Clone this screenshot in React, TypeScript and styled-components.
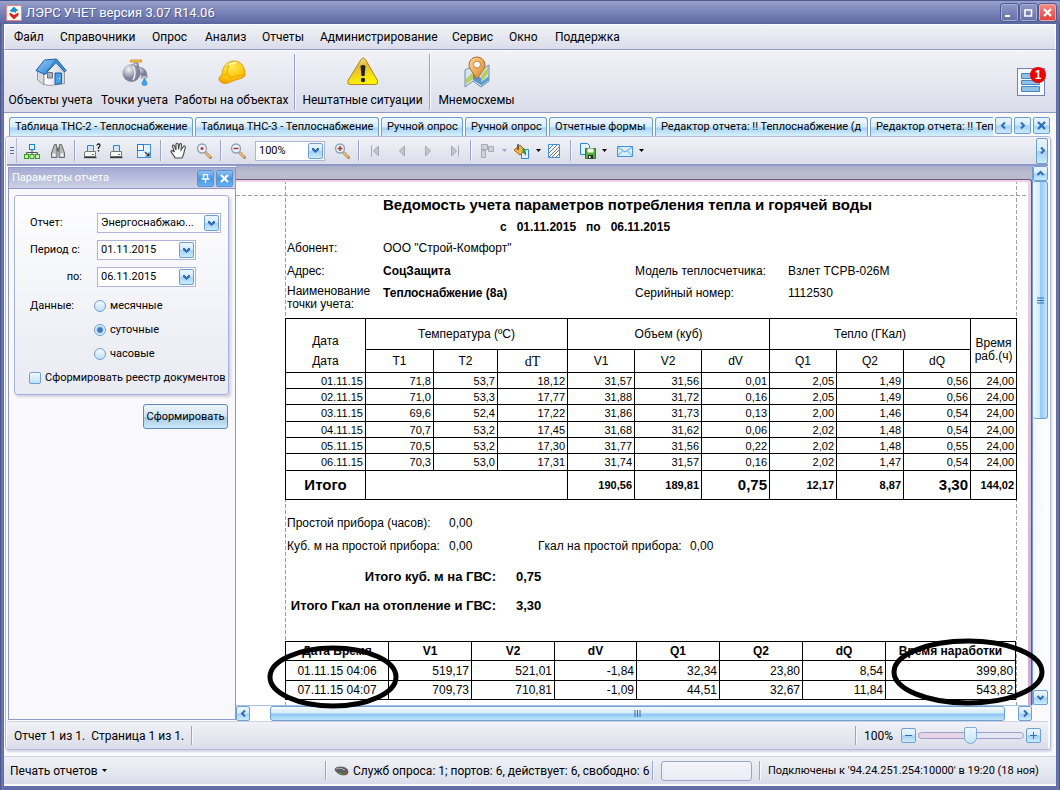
import React from "react";
import styled, { createGlobalStyle, css } from "styled-components";

const uiFont = 'Roboto, "Noto Sans", sans-serif';
const printFont = '"Liberation Sans", Arial, sans-serif';
const edge = "#8f99c6";

const GlobalStyle = createGlobalStyle`
  * { box-sizing: border-box; }
  body { margin: 0; font: 12px/16px ${uiFont}; color: #000; }
  button, input, select { font: inherit; color: inherit; margin: 0; padding: 0; }
  button { border: 0; background: none; cursor: pointer; }
  svg { display: block; }
`;

const barFill = css`background: linear-gradient(#f1f2f7, #e6e8f0 50%, #dadcea);`;
const glass = css`
  border: 1px solid #6f9fd0;
  border-radius: 2px;
  background: linear-gradient(#eaf6fe, #d3eafb 48%, #a4d0f3 52%, #c9ecff);
`;

/* ---------- window frame ---------- */

const Frame = styled.div`
  min-height: 100vh;
  display: flex;
  flex-direction: column;
  padding: 0 4px 4px;
  background: linear-gradient(90deg, #4e598f 1px, #7984b8 2px, #626ca5 3px, #626ca5 calc(100% - 3px), #7984b8 calc(100% - 2px), #4e598f calc(100% - 1px));
`;

const TitleBar = styled.header`
  display: flex;
  align-items: center;
  gap: 4px;
  height: 24px;
  margin: 0 -4px;
  padding: 0 4px 0 6px;
  color: #fff;
  border-top: 1px solid #4e598f;
  background: linear-gradient(#9aa3ce, #8790bf 25%, #6670aa 85%, #5a649c);
`;

const WindowTitle = styled.h1`
  flex: 1;
  margin: 0;
  font: 13px/20px ${uiFont};
  text-shadow: 1px 1px 0 #4e598f;
`;

const CaptionButtons = styled.div`
  display: flex;
  gap: 2px;
`;

const CaptionButton = styled.button<{ $close?: boolean }>`
  display: grid;
  place-items: center;
  width: 17px;
  height: 17px;
  border: 1px solid ${(p) => (p.$close ? "#f3a9a4" : "#a5aed4")};
  border-radius: 2px;
  outline: 1px solid #515c94;
  background: ${(p) => (p.$close ? "linear-gradient(#f28b85, #e3423a)" : "linear-gradient(#8d96c4, #6771aa)")};
`;

const Client = styled.div`
  flex: 1;
  display: flex;
  flex-direction: column;
  background: #fbfbfe;
  padding-bottom: 2px;
`;

const MenuBar = styled.nav`
  display: flex;
  align-items: center;
  gap: 17px;
  height: 26px;
  padding: 0 9px;
  border: 1px solid #fff;
  border-bottom-color: ${edge};
  ${barFill}
`;

const MenuItem = styled.button<{ $width: number }>`
  width: ${(p) => p.$width}px;
  white-space: nowrap;
  text-align: left;
`;

const Ribbon = styled.div`
  display: flex;
  height: 63px;
  padding: 3px 11px 2px 0;
  border-top: 1px solid #fff;
  border-bottom: 1px solid ${edge};
  ${barFill}
`;

const RibbonButton = styled.button<{ $width: number }>`
  display: flex;
  flex-direction: column;
  align-items: center;
  width: ${(p) => p.$width}px;
  gap: 4px;
  padding-top: 2px;
  white-space: nowrap;
`;

const Divider = styled.i<{ $space?: number }>`
  flex: none;
  width: 2px;
  align-self: stretch;
  margin: 0 ${(p) => p.$space ?? 3}px;
  border-left: 1px solid #9ba4cc;
  border-right: 1px solid #f8f8fc;
`;

const Notices = styled.button`
  position: relative;
  align-self: center;
  width: 28px;
  height: 28px;
  margin-left: auto;
  border: 1px solid #7380b4;
  background: #f8fafd;
  padding: 3px;
`;

const Badge = styled.span`
  position: absolute;
  top: -2px;
  right: -2px;
  width: 16px;
  height: 16px;
  border-radius: 8px;
  background: #f20000;
  color: #fff;
  font: bold 12px/16px ${printFont};
`;

/* ---------- document tabs ---------- */

const Workspace = styled.main`
  flex: 1;
  display: flex;
  flex-direction: column;
  padding: 4px 5px 6px 1px;
`;

const TabStrip = styled.div`
  display: flex;
  align-items: flex-start;
  gap: 2px;
  height: 19px;
  padding: 0 1px 0 4px;
`;

const Tabs = styled.div`
  display: flex;
  flex: 1;
  min-width: 0;
  gap: 2px;
  overflow: hidden;
`;

const Tab = styled.button<{ $width: number }>`
  flex: none;
  width: ${(p) => p.$width}px;
  height: 19px;
  padding: 0 5px;
  overflow: hidden;
  white-space: nowrap;
  text-align: left;
  font: 11px/18px ${uiFont};
  border: 1px solid #6f9fd0;
  border-bottom: 0;
  border-radius: 3px 3px 0 0;
  background: linear-gradient(#f2f9fe, #d5ebfb 50%, #a9d3f4 55%, #d6f1ff);
`;

const GlassButton = styled.button<{ $w?: number; $h?: number }>`
  ${glass}
  flex: none;
  display: grid;
  place-items: center;
  width: ${(p) => p.$w ?? 17}px;
  height: ${(p) => p.$h ?? 17}px;
`;

const Document = styled.section`
  flex: 1;
  display: flex;
  flex-direction: column;
  border: 1px solid #b4b9da;
  border-radius: 3px;
  padding: 0 2px 0 1px;
  background: #fbfbfe;
  box-shadow: 1px 2px 2px #d5d6e0;
`;

const Toolbar = styled.div`
  display: flex;
  align-items: center;
  height: 29px;
  border-bottom: 2px solid ${edge};
  ${barFill}
`;

const Grip = styled.i`
  display: grid;
  place-items: center;
  align-self: stretch;
  width: 9px;
  margin: 1px 2px 1px 1px;
  border-right: 1px solid #b4b9da;
`;

const Tool = styled.button<{ $width?: number }>`
  flex: none;
  display: flex;
  align-items: center;
  gap: 6px;
  width: ${(p) => p.$width ?? 26}px;
  height: 22px;
  padding-left: 5px;
`;

const ToolDivider = styled(Divider)`
  margin: 3px 3px;
`;

const Field = styled.span<{ $width: number }>`
  display: flex;
  align-items: center;
  width: ${(p) => p.$width}px;
  height: 20px;
  padding-right: 1px;
  border: 1px solid #b0b5d8;
  background: #fff;
`;

const controlText = css`
  flex: 1;
  min-width: 0;
  height: 18px;
  padding: 0 0 0 3px;
  border: 0;
  outline: 0;
  background: none;
  font: 11px/18px ${uiFont};
`;

const Select = styled.select`
  ${controlText}
  appearance: none;
  text-overflow: ellipsis;
`;

const TextInput = styled.input`${controlText}`;

const Content = styled.div`
  flex: 1;
  display: flex;
`;

/* ---------- report parameters ---------- */

const Panel = styled.aside`
  flex: none;
  width: 228px;
  margin: 1px 0 1px 1px;
  border: 1px solid ${edge};
  background: #f9f9fc;
  font: 11px/16px ${uiFont};
`;

const PanelHeader = styled.div`
  display: flex;
  align-items: center;
  gap: 2px;
  height: 21px;
  padding: 0 2px 0 3px;
  color: #fff;
  border-bottom: 1px solid ${edge};
  background: linear-gradient(#a5acd2, #bcc1de 60%, #cfd2e7);
`;

const PanelTitle = styled.h2`
  flex: 1;
  margin: 0;
  font: 11px/18px ${uiFont};
`;

const PanelButton = styled(GlassButton)`
  border-color: #d6e9fa;
  outline: 1px solid #5b92cc;
  outline-offset: -1px;
  background: linear-gradient(#8cc0f2, #4b97e0 50%, #61b1f2);
`;

const Form = styled.form`
  padding: 6px 6px 0 5px;
`;

const Card = styled.fieldset`
  min-width: 0;
  margin: 0;
  padding: 17px 0 4px 14px;
  border: 1px solid #a9b0d5;
  border-radius: 3px;
  background: linear-gradient(#fefeff, #e9eaf3);
  box-shadow: 2px 2px 3px #cfd0da;
`;

const FormRow = styled.div`
  display: grid;
  grid-template-columns: 67px 1fr;
  align-items: center;
  height: 20px;
  margin-bottom: 7px;
  padding-left: 1px;
`;

const RowLabel = styled.label<{ $end?: boolean }>`
  text-align: ${(p) => (p.$end ? "right" : "left")};
  padding-right: 15px;
  white-space: nowrap;
`;

const ChoiceRow = styled.div`
  display: grid;
  grid-template-columns: 64px 1fr;
  align-items: start;
  padding-left: 1px;
`;

const Choices = styled.div`
  display: flex;
  flex-direction: column;
`;

const Choice = styled.label`
  display: flex;
  align-items: center;
  gap: 4px;
  height: 24px;
  white-space: nowrap;
`;

const Radio = styled.input`
  appearance: none;
  width: 12px;
  height: 12px;
  border: 1px solid #6f9fd0;
  border-radius: 6px;
  background: linear-gradient(#f4faff, #bfe0f8);
  &:checked { background: radial-gradient(#3c78bd 0 2px, #7fb2e2 3px, #dff0fd 4px); }
`;

const CheckBox = styled.input`
  appearance: none;
  width: 12px;
  height: 12px;
  ${glass}
  background: linear-gradient(#f4faff, #bfe0f8);
`;

const Submit = styled.button`
  ${glass}
  display: block;
  width: 85px;
  height: 25px;
  margin: 9px 1px 0 auto;
  border-color: #5d8ab8;
  border-radius: 3px;
  background: linear-gradient(#eef6fc, #cfe3f3 50%, #a8cbe6 55%, #cdeaf9);
`;

/* ---------- report viewer ---------- */

const Viewer = styled.div`
  flex: 1;
  min-width: 0;
  display: grid;
  grid-template-columns: 1fr 16px;
  grid-template-rows: 1fr 16px;
`;

const Desk = styled.div`
  display: flex;
  padding-top: 13px;
  background: linear-gradient(#a9acc4, #b9bbcf 6px);
`;

const dash = (dir: string) => `repeating-linear-gradient(${dir}, #a0a0a0 0 4px, transparent 4px 6px)`;

const Paper = styled.article`
  flex: 1;
  min-width: 0;
  border-top: 1px solid #79507a;
  border-right: 1px solid #79507a;
  border-top-right-radius: 3px;
  padding: 14px 14px 5px 49px;
  font: 12px/16px ${printFont};
  background:
    linear-gradient(#ead3e6, #ead3e6) top / 100% 2px no-repeat,
    linear-gradient(#ead3e6, #cfa8d2) right / 3px 100% no-repeat,
    ${dash("180deg")} 49px 0 / 1px 100% no-repeat,
    ${dash("180deg")} right 14px top 0 / 1px 100% no-repeat,
    ${dash("90deg")} 0 15px / 100% 1px no-repeat,
    #fff;
`;

const ReportTitle = styled.h2`
  margin: 0;
  padding-left: 98px;
  font: bold 15px/22px ${printFont};
  white-space: nowrap;
`;

const Period = styled.p`
  display: flex;
  gap: 10px;
  margin: 0;
  padding-left: 215px;
  font-weight: bold;
  line-height: 22px;
`;

const Facts = styled.dl`
  display: grid;
  grid-template-columns: 96px 252px 153px 1fr;
  grid-template-rows: 19px 28px 26px;
  align-items: center;
  margin: 0 0 7px;
  padding-left: 2px;
`;

const Term = styled.dt<{ $two?: boolean; $top?: boolean }>`
  ${(p) => (p.$two || p.$top) && "align-self: start;"}
  ${(p) => p.$two && "line-height: 13px;"}
`;

const Fact = styled.dd<{ $bold?: boolean; $top?: boolean }>`
  margin: 0;
  ${(p) => p.$bold && "font-weight: bold;"}
  ${(p) => p.$top && "align-self: start;"}
`;

const Grid = styled.table`
  width: 100%;
  table-layout: fixed;
  border-collapse: collapse;
  th, td { border: 1px solid #000; padding: 0 2px; white-space: nowrap; text-align: right; }
  th { text-align: center; font-weight: normal; }
`;

const DailyGrid = styled(Grid)`
  font-size: 11px;
  line-height: 12px;
  thead th { font-size: 12px; line-height: 13px; }
  tbody tr { height: 16px; }
  tbody tr:nth-child(3n) { height: 17px; }
  tfoot { font-weight: bold; }
  tfoot tr { height: 29px; }
  tfoot th { font-weight: bold; font-size: 15px; }
`;

const GroupRow = styled.tr`height: 31px;`;
const NameRow = styled.tr`height: 23px;`;

const TallHead = styled.th<{ $line: number; $drop: number }>`
  && {
    vertical-align: bottom;
    line-height: ${(p) => p.$line}px;
    padding: 0 0 ${(p) => p.$drop}px;
  }
`;

const SerifHead = styled.th`
  && { font-family: "Liberation Serif", "Times New Roman", serif; font-size: 14px; }
`;

const Strong = styled.td`font-size: 15px;`;

const Downtime = styled.dl`
  display: grid;
  grid-template-columns: 162px 89px 152px 1fr;
  grid-auto-rows: 23px;
  align-items: center;
  margin: 11px 0 5px;
  padding-left: 2px;
  white-space: nowrap;
`;

const Totals = styled.dl`
  display: grid;
  grid-template-columns: 209px 1fr;
  grid-auto-rows: 29px;
  align-items: center;
  column-gap: 20px;
  margin: 0 0 21px;
  padding-left: 2px;
  font-size: 13px;
  font-weight: bold;
  white-space: nowrap;
  dt { text-align: right; }
`;

const MeterBlock = styled.div`position: relative;`;

const MeterGrid = styled(Grid)`
  font-size: 12px;
  line-height: 14px;
  width: calc(100% - 1px);
  th { font-weight: bold; }
  tr { height: 19px; }
  tbody tr:first-child { height: 20px; }
  td:first-child { text-align: center; }
`;

const Mark = styled.svg<{ $side: "left" | "right" }>`
  position: absolute;
  z-index: 2;
  overflow: visible;
  pointer-events: none;
  ${(p) => (p.$side === "left" ? "left: -18px; top: 3px;" : "right: -29px; top: -2px;")}
`;

const VScroll = styled.div`
  display: flex;
  flex-direction: column;
  border-left: 1px solid #6f9fd0;
  background: linear-gradient(90deg, #f0f6fc, #fff);
`;

const VThumb = styled.div`
  display: grid;
  place-items: center;
  flex: 237 0 0;
  border: 1px solid #6f9fd0;
  border-left: 0;
  border-radius: 3px;
  background: linear-gradient(90deg, #f4fbff, #d2eafa 48%, #95c8f1 52%, #bfe6fd);
`;

const HScroll = styled.div`
  display: flex;
  border-top: 1px solid #a9c4e0;
  background: #fff;
`;

const HThumb = styled.div`
  display: grid;
  place-items: center;
  flex: 1;
  border: 1px solid #6f9fd0;
  border-radius: 3px;
  background: linear-gradient(#f4fbff, #d2eafa 48%, #8cc4f0 52%, #bfe6fd);
`;

const Gap = styled.i<{ $grow?: number; $size?: number }>`
  flex: ${(p) => (p.$grow ? `${p.$grow} 0 0` : `0 0 ${p.$size}px`)};
`;

/* ---------- status bars ---------- */

const PageStatus = styled.footer`
  display: flex;
  align-items: center;
  height: 28px;
  padding: 0 7px;
  border-top: 1px solid #cfd2e4;
  ${barFill}
`;

const Spacer = styled.span`flex: 1;`;

const StatusDivider = styled(Divider)`
  margin: 4px 7px;
`;

const ZoomSlider = styled.input`
  appearance: none;
  width: 106px;
  height: 18px;
  margin: 0 2px;
  background: none;
  &::-webkit-slider-runnable-track {
    height: 7px;
    border: 1px solid #9aa0c8;
    border-radius: 4px;
    background: linear-gradient(90deg, #ead3e6 50%, #e3e7f2 50%);
  }
  &::-webkit-slider-thumb {
    appearance: none;
    width: 13px;
    height: 17px;
    margin-top: -6px;
    border: 1px solid #7fabd6;
    border-radius: 2px 2px 7px 7px;
    background: linear-gradient(#eef8ff, #c3e4f9);
  }
`;

const ServiceStatus = styled.footer`
  display: flex;
  align-items: center;
  height: 28px;
  padding: 0 9px 0 6px;
  border-top: 1px solid #cfd2e4;
  white-space: nowrap;
  ${barFill}
`;

const PrintMenu = styled.button`
  display: flex;
  align-items: center;
  gap: 4px;
`;

const ServiceText = styled.span<{ $width: number; $small?: boolean }>`
  width: ${(p) => p.$width}px;
  font-size: ${(p) => (p.$small ? 11 : 12)}px;
`;

const Progress = styled.progress`
  appearance: none;
  width: 91px;
  height: 20px;
  border: 1px solid #9aa3cc;
  border-radius: 3px;
  background: linear-gradient(#f4f5fa, #eaecf4);
  &::-webkit-progress-bar { background: none; }
`;

/* ---------- drawings ---------- */

const Icon = ({ size = 16, w, h, children }: { size?: number; w?: number; h?: number; children: React.ReactNode }) => (
  <svg width={w ?? size} height={h ?? size} viewBox={`0 0 ${w ?? size} ${h ?? size}`} aria-hidden="true">
    {children}
  </svg>
);

const Caret = ({ color = "#000" }: { color?: string }) => (
  <Icon w={5} h={3}><path d="M0 0h5L2.500 3z" fill={color} /></Icon>
);

const Chevron = ({ turn = 0 }: { turn?: number }) => (
  <svg width="9" height="9" viewBox="0 0 9 9" aria-hidden="true">
    <path d="M1.500 3l3 3 3-3" transform={`rotate(${turn} 4.500 4.500)`} fill="none" stroke="#2f6db3" strokeWidth="2" />
  </svg>
);

const DropArrow = () => (
  <Icon w={7} h={5}><path d="M0 0h2v1h1v1h1V1h1V0h2v2L3.500 5 0 2z" fill="#2f6db3" /></Icon>
);

const Cross = ({ color, size = 9 }: { color: string; size?: number }) => (
  <svg width={size} height={size} viewBox="0 0 9 9" aria-hidden="true">
    <path d="M1 1l7 7M8 1L1 8" stroke={color} strokeWidth="2.200" />
  </svg>
);

const Logo = () => (
  <Icon>
    <rect x=".5" y=".5" width="15" height="15" fill="#fff" stroke="#e8877c" />
    <path d="M8 1.500l4.500 4.500H10v2H8L5 6.500 3.500 6z" fill="#1d8fd8" />
    <path d="M8 14.500L3.500 10V7.500L8 10l4.500-2.500V10z" fill="#d9291c" />
    <circle cx="8" cy="8" r="1.300" fill="#fff" />
  </Icon>
);

const House = () => (
  <Icon size={32}>
    <defs>
      <linearGradient id="roof" x2="1" y2="1"><stop stopColor="#9bd3fb" /><stop offset="1" stopColor="#1f78d1" /></linearGradient>
      <linearGradient id="wall" x2="1"><stop stopColor="#fff" /><stop offset="1" stopColor="#d3d3d8" /></linearGradient>
    </defs>
    <path d="M2.500 14L9 16v13l-6.500-5z" fill="#d9d9de" stroke="#86868e" strokeWidth=".8" />
    <path d="M9 16L21.500 4.500 29.500 14v13.500L15 29.500 9 28.500z" fill="url(#wall)" stroke="#86868e" strokeWidth=".8" />
    <path d="M1 14.500L9.500 4 21.500 3 10 18.500z" fill="url(#roof)" stroke="#1b5fa8" strokeLinejoin="round" />
    <path d="M21.500 3L31 14.500l-1.500 1.500L21 6.500 10 18.500" fill="#3f94de" stroke="#1b5fa8" strokeLinejoin="round" />
    <path d="M20 17h6.500v10.500L20 28.500z" fill="#4aa0ea" stroke="#1b5fa8" />
    <path d="M12.500 16.500h5v5.500h-5z" fill="#aab4bf" stroke="#6e6e76" />
    <circle cx="24.500" cy="22.500" r=".8" fill="#fff" />
  </Icon>
);

const Faucet = () => (
  <Icon size={32}>
    <defs>
      <radialGradient id="chrome" cx=".35" cy=".3"><stop stopColor="#f6f6fb" /><stop offset="1" stopColor="#80809a" /></radialGradient>
    </defs>
    <path d="M11 5q0-2 3-1h6q3-1 3 1t-3 1h-6q-3 1-3-1z" fill="#f8c455" stroke="#c98f2a" strokeWidth=".8" />
    <path d="M15 7h4l1 6h-6z" fill="url(#chrome)" stroke="#77778c" strokeWidth=".7" />
    <path d="M14 12c8-2 14 0 14 9h-5c0-3-3-4-8-3z" fill="url(#chrome)" stroke="#77778c" strokeWidth=".7" />
    <path d="M22 20h6v2h-6z" fill="#d5d5e0" stroke="#77778c" strokeWidth=".6" />
    <circle cx="12.500" cy="17" r="9" fill="url(#chrome)" />
    <path d="M14 10q4 7 0 14" fill="none" stroke="#eeeef5" strokeWidth="1.500" />
    <path d="M25.500 22.500q5 7 0 7t0-7z" fill="#45a2ee" stroke="#2078c8" strokeWidth=".6" />
  </Icon>
);

const Helmet = () => (
  <Icon size={32}>
    <defs>
      <radialGradient id="shell" cx=".45" cy=".2" r=".9"><stop stopColor="#ffee62" /><stop offset=".6" stopColor="#ffc60c" /><stop offset="1" stopColor="#e59500" /></radialGradient>
    </defs>
    <path d="M3 24q-1-3 3-5C6 11 11 5 18 5c7 0 11 5 11 14 0 3-7 4-12 6s-10 5-14-1z" fill="url(#shell)" stroke="#d99300" strokeWidth=".8" />
    <path d="M6 19c6-2 9 3 9 3 4-2 9-2 14-4M18 5c-6 2-7 8-7 13" fill="none" stroke="#f0aa00" strokeWidth="1.200" />
    <path d="M13 9q3-3 7-2" stroke="#fff9b0" strokeWidth="2" fill="none" />
  </Icon>
);

const Warning = () => (
  <Icon size={32}>
    <defs>
      <linearGradient id="alarm" y2="1" x2=".3"><stop stopColor="#fff1a0" /><stop offset=".4" stopColor="#e5ba35" /><stop offset="1" stopColor="#fff200" /></linearGradient>
    </defs>
    <path d="M14 3.500q2.500-3 4.500 0l12 21q1 4-2 4H3q-3 0-2-4z" fill="url(#alarm)" stroke="#a98720" />
    <path d="M13.500 10q2.500-2 5 0l-1 10h-3z" fill="#222" />
    <circle cx="16" cy="24" r="2.200" fill="#222" />
  </Icon>
);

const MapPin = () => (
  <Icon size={32}>
    <defs>
      <linearGradient id="pin" x2="1" y2="1"><stop stopColor="#ffd99a" /><stop offset="1" stopColor="#d8832a" /></linearGradient>
    </defs>
    <path d="M4 14l8-4 8 4 8-5v16l-8 6-8-6-8 6z" fill="#d6e6ef" stroke="#6d8bad" />
    <path d="M5 23l7-7v7l-7 5zM20 19l7-8v7l-7 8z" fill="#b8cf5b" />
    <path d="M12 16l8 6v7l-8-5z" fill="#5a95cc" />
    <path d="M20 26l8-6v4l-8 6z" fill="#5f9ecf" />
    <path d="M16 23C11 15 8 13 8 9a8 8 0 0 1 16 0c0 4-3 6-8 14z" fill="url(#pin)" stroke="#b06a22" />
    <circle cx="16" cy="8.500" r="3.500" fill="#fff" stroke="#c98236" />
  </Icon>
);

const Sheets = () => (
  <Icon size={20}>
    <path d="M.5 1.500h18v5H.5zM.5 8.500h18v4H.5zM.5 14.500h18v5H.5z" fill="#8fc3e6" stroke="#4a86bd" />
  </Icon>
);

const Tree = () => (
  <Icon>
    <path d="M8 6v6M2.500 12V9.500h11V12" fill="none" stroke="#555" />
    <rect x="5.500" y="1.500" width="5" height="5" fill="#dff1ff" stroke="#1d7fd0" />
    {[0.5, 6, 11.5].map((x) => <rect key={x} x={x} y="11.500" width="4" height="4" fill="#c8f0b0" stroke="#3a9a22" />)}
  </Icon>
);

const Binoculars = () => (
  <Icon>
    <path d="M4.500 1.500h2L7 9v5.500H1.500V10zM11.500 1.500h-2L9 9v5.500h5.500V10z" fill="#b9b9b9" stroke="#6a6a6a" />
    <path d="M2.500 10.500h3v3h-3zM10.500 10.500h3v3h-3z" fill="#e8f3fa" />
    <path d="M7 4.500h2v4H7z" fill="#6a6a6a" />
  </Icon>
);

const Printer = ({ ask }: { ask?: boolean }) => (
  <Icon w={ask ? 18 : 16} h={16}>
    <path d="M3.500 8.500v-6h6v6z" fill="#cfe6fa" stroke="#3d7fc4" />
    <path d="M.5 13.500V10q0-1.500 1.500-1.500h9.500V13.500z" fill="#f6f6f4" stroke="#777" />
    <path d="M0 14.500h12.500" stroke="#333" strokeWidth="1.300" />
    <path d="M8 11.500h2" stroke="#777" />
    {ask && <path d="M13 2.500q0-1.500 1.500-1.500t1.500 1.500q0 1-1.500 2v1.500M14.500 7v1.500" fill="none" stroke="#222" strokeWidth="1.300" />}
  </Icon>
);

const FullPage = () => (
  <Icon>
    <rect x="1.500" y="1.500" width="13" height="13" fill="#e4f3ff" stroke="#3f93dc" />
    <rect x="1.500" y="1.500" width="6" height="6" fill="#fff" stroke="#1d7fd0" />
    <path d="M9 9l4 4M13 9.500V13H9.500" fill="none" stroke="#333" strokeWidth="1.200" />
  </Icon>
);

const Hand = () => (
  <Icon size={17}>
    <path d="M5 16c-1-3-3.500-4.500-4-6.500 0-1.500 2-1 3.500.5L2.500 4.500C2 3 4 2.500 4.500 4L6 8V2.500c0-1.700 2-1.700 2.200 0L8.500 7.500l1-5c.4-1.500 2.200-1 2 .5L11 8l2.500-3.500c1-1.200 2.500-.2 1.800 1.200C14 9 14 13 12 16z" fill="#fff" stroke="#4a4a4a" strokeWidth="1.100" />
  </Icon>
);

const Lens = ({ mark }: { mark: "dot" | "minus" | "plus" }) => (
  <Icon>
    <path d="M9.500 9.500l5 5" stroke="#b98a45" strokeWidth="3" strokeLinecap="round" />
    <path d="M9.500 9.500l4.500 4.500" stroke="#f0cd8c" strokeWidth="1.200" />
    <circle cx="6" cy="5.500" r="4.500" fill="#e6f3fb" stroke="#8fa3b5" strokeWidth="1.300" />
    {mark === "dot" ? <circle cx="6" cy="5.500" r="1.500" fill="#c8322c" /> : <path d={mark === "plus" ? "M3.500 5.500h5M6 3v5" : "M3.500 5.500h5"} stroke="#b2302b" strokeWidth="1.400" />}
  </Icon>
);

const Step = ({ back, stop }: { back?: boolean; stop?: boolean }) => (
  <Icon>
    <g transform={back ? "translate(16 0) scale(-1 1)" : undefined} fill="#c3c5cc" stroke="#a5a8b2">
      <path d="M5.500 3v10l5-5z" />
      {stop && <path d="M12.500 2.500v11" fill="none" />}
    </g>
  </Icon>
);

const Pages = () => (
  <Icon><path d="M1.500 1.500h6v5h-6zM8.500 3.500h5v5h-5zM1.500 7.500h4v7h-4z" fill="#d0d2d8" stroke="#a8aab3" /></Icon>
);

const Bucket = () => (
  <Icon w={17} h={16}>
    <path d="M8.500 6.500h7v9h-7z" fill="#e0f1fd" stroke="#2f86cf" />
    <path d="M1 7l6-5 5 5-5 5z" fill="#f3b447" stroke="#9c6718" />
    <path d="M5 1v6" stroke="#333" strokeWidth="1.300" />
    <path d="M9.500 5q4 0 3.500 8-1.500-3-3.500-3z" fill="#2f9b3c" />
  </Icon>
);

const Watermark = () => (
  <Icon>
    <path d="M2.500 1.500h11v13h-11z" fill="#f6f6f6" stroke="#3f93dc" />
    <path d="M3 6l4-4M3 10l8-8M3 14l10-10M6 14l7-7M10 14l3-3" stroke="#777" />
  </Icon>
);

const SaveCopy = () => (
  <Icon>
    <path d="M.5.5h7l2 2v9h-9z" fill="#e4f3ff" stroke="#2f86cf" />
    <path d="M5.500 5.500h10v10h-10z" fill="#52b03c" stroke="#2b7a1c" />
    <path d="M7.500 5.500h6v4h-6z" fill="#f4f7f2" />
    <path d="M8 12h5v3.500H8z" fill="#2a2a2a" />
    <path d="M9 13h1.500v2H9z" fill="#fff" />
  </Icon>
);

const Mail = () => (
  <Icon>
    <path d="M.5 3.500h15v10H.5z" fill="#d7edfc" stroke="#3f93dc" />
    <path d="M.5 4l7.500 5 7.500-5M.5 13l5-5M15.500 13l-5-5" fill="none" stroke="#5ba5e2" />
  </Icon>
);

const Modem = () => (
  <Icon w={15} h={10}>
    <path d="M1 4q0-3 5-3 8 0 8 5 0 3-4 3-6 0-9-5z" fill="#5d5d62" stroke="#3a3a3e" strokeWidth=".6" />
    <path d="M2 3q3-2 9 1" stroke="#b5b5ba" fill="none" />
    <path d="M5 7.500h2M8 8h1" stroke="#3fc43a" /><path d="M10 7.500h3" stroke="#e83a20" />
  </Icon>
);

/* ---------- data ---------- */

const menu: [string, number][] = [
  ["Файл", 29], ["Справочники", 75], ["Опрос", 36], ["Анализ", 40], ["Отчеты", 41],
  ["Администрирование", 115], ["Сервис", 40], ["Окно", 29], ["Поддержка", 63],
];

const tabs: [string, number][] = [
  ["Таблица ТНС-2 - Теплоснабжение", 184],
  ["Таблица ТНС-3 - Теплоснабжение", 184],
  ["Ручной опрос", 82],
  ["Ручной опрос", 82],
  ["Отчетные формы", 104],
  ["Редактор отчета: !! Теплоснабжение (д", 213],
  ["Редактор отчета: !! Теплоснабжение (д", 213],
];

const daily = [
  ["01.11.15", "71,8", "53,7", "18,12", "31,57", "31,56", "0,01", "2,05", "1,49", "0,56", "24,00"],
  ["02.11.15", "71,0", "53,3", "17,77", "31,88", "31,72", "0,16", "2,05", "1,49", "0,56", "24,00"],
  ["03.11.15", "69,6", "52,4", "17,22", "31,86", "31,73", "0,13", "2,00", "1,46", "0,54", "24,00"],
  ["04.11.15", "70,7", "53,2", "17,45", "31,68", "31,62", "0,06", "2,02", "1,48", "0,54", "24,00"],
  ["05.11.15", "70,5", "53,2", "17,30", "31,77", "31,56", "0,22", "2,02", "1,48", "0,55", "24,00"],
  ["06.11.15", "70,3", "53,0", "17,31", "31,74", "31,57", "0,16", "2,02", "1,47", "0,54", "24,00"],
];

const readings = [
  ["01.11.15 04:06", "519,17", "521,01", "-1,84", "32,34", "23,80", "8,54", "399,80"],
  ["07.11.15 04:07", "709,73", "710,81", "-1,09", "44,51", "32,67", "11,84", "543,82"],
];

const Columns = ({ widths }: { widths: number[] }) => (
  <colgroup>{widths.map((w, i) => <col key={i} width={w} />)}</colgroup>
);

/* ---------- sections ---------- */

const ReportTools = () => (
  <Toolbar>
    <Grip><Icon w={4} h={7}><path d="M0 .5h4M0 3.500h4M0 6.500h4" stroke="#5b6bb0" /></Icon></Grip>
    <Tool aria-label="Структура"><Tree /></Tool>
    <Tool aria-label="Найти"><Binoculars /></Tool>
    <ToolDivider />
    <Tool aria-label="Печать с параметрами"><Printer ask /></Tool>
    <Tool aria-label="Печать"><Printer /></Tool>
    <Tool aria-label="Масштаб страницы"><FullPage /></Tool>
    <ToolDivider />
    <Tool aria-label="Рука"><Hand /></Tool>
    <Tool aria-label="Лупа"><Lens mark="dot" /></Tool>
    <ToolDivider />
    <Tool aria-label="Уменьшить"><Lens mark="minus" /></Tool>
    <Gap $size={4} />
    <Field $width={70}>
      <Select aria-label="Масштаб"><option>100%</option></Select>
      <GlassButton $w={15} $h={16} aria-label="Выбрать масштаб"><DropArrow /></GlassButton>
    </Field>
    <Gap $size={4} />
    <Tool aria-label="Увеличить"><Lens mark="plus" /></Tool>
    <ToolDivider />
    <Tool aria-label="Первая"><Step back stop /></Tool>
    <Tool aria-label="Предыдущая"><Step back /></Tool>
    <Tool aria-label="Следующая"><Step /></Tool>
    <Tool aria-label="Последняя"><Step stop /></Tool>
    <ToolDivider />
    <Tool $width={33} aria-label="Несколько страниц"><Pages /><Caret color="#9aa3d8" /></Tool>
    <Tool $width={33} aria-label="Цвет фона"><Bucket /><Caret /></Tool>
    <Tool aria-label="Водяной знак"><Watermark /></Tool>
    <ToolDivider />
    <Tool $width={37} aria-label="Экспорт"><SaveCopy /><Caret /></Tool>
    <Tool $width={37} aria-label="Отправить"><Mail /><Caret /></Tool>
    <Spacer />
    <GlassButton $w={12} $h={26} aria-label="Еще"><Chevron turn={-90} /></GlassButton>
  </Toolbar>
);

const ReportParameters = () => (
  <Panel>
    <PanelHeader>
      <PanelTitle>Параметры отчета</PanelTitle>
      <PanelButton aria-label="Закрепить">
        <Icon w={9} h={9}><path d="M2.500 0v5M6.500 0v5M2.500.5h4M.5 5h8M4.500 5v4" fill="none" stroke="#fff" strokeWidth="1.300" /></Icon>
      </PanelButton>
      <PanelButton aria-label="Закрыть панель"><Cross color="#fff" /></PanelButton>
    </PanelHeader>
    <Form onSubmit={(e) => e.preventDefault()}>
      <Card>
        <FormRow>
          <RowLabel htmlFor="report">Отчет:</RowLabel>
          <Field $width={124}>
            <Select id="report"><option>Энергоснабжаю...</option></Select>
            <GlassButton type="button" $w={15} $h={16} aria-label="Выбрать отчет"><DropArrow /></GlassButton>
          </Field>
        </FormRow>
        <FormRow>
          <RowLabel htmlFor="from">Период с:</RowLabel>
          <Field $width={99}>
            <TextInput id="from" defaultValue="01.11.2015" />
            <GlassButton type="button" $w={15} $h={16} aria-label="Выбрать начало"><DropArrow /></GlassButton>
          </Field>
        </FormRow>
        <FormRow>
          <RowLabel htmlFor="to" $end>по:</RowLabel>
          <Field $width={99}>
            <TextInput id="to" defaultValue="06.11.2015" />
            <GlassButton type="button" $w={15} $h={16} aria-label="Выбрать конец"><DropArrow /></GlassButton>
          </Field>
        </FormRow>
        <ChoiceRow role="radiogroup" aria-labelledby="kind">
          <Choice as="span" id="kind">Данные:</Choice>
          <Choices>
            <Choice><Radio type="radio" name="kind" />месячные</Choice>
            <Choice><Radio type="radio" name="kind" defaultChecked />суточные</Choice>
            <Choice><Radio type="radio" name="kind" />часовые</Choice>
          </Choices>
        </ChoiceRow>
        <Choice><CheckBox type="checkbox" />Сформировать реестр документов</Choice>
      </Card>
      <Submit type="submit">Сформировать</Submit>
    </Form>
  </Panel>
);

const Report = () => (
  <Paper>
    <ReportTitle>Ведомость учета параметров потребления тепла и горячей воды</ReportTitle>
    <Period><span>с</span><span>01.11.2015</span><span>по</span><span>06.11.2015</span></Period>
    <Facts>
      <Term>Абонент:</Term><Fact>ООО "Строй-Комфорт"</Fact><dt /><dd />
      <Term>Адрес:</Term><Fact $bold>СоцЗащита</Fact>
      <Term>Модель теплосчетчика:</Term><Fact>Взлет ТСРВ-026М</Fact>
      <Term $two>Наименование<br />точки учета:</Term><Fact $bold $top>Теплоснабжение (8а)</Fact>
      <Term $top>Серийный номер:</Term><Fact $top>1112530</Fact>
    </Facts>
    <DailyGrid>
      <Columns widths={[80, 68, 64, 70, 67, 67, 68, 67, 67, 67, 46]} />
      <thead>
        <GroupRow>
          <TallHead rowSpan={2} $line={20} $drop={1}>Дата<br />Дата</TallHead>
          <th colSpan={3}>Температура (ºC)</th>
          <th colSpan={3}>Объем (куб)</th>
          <th colSpan={3}>Тепло (ГКал)</th>
          <TallHead rowSpan={2} $line={13} $drop={9}>Время<br />раб.(ч)</TallHead>
        </GroupRow>
        <NameRow>
          <th>T1</th><th>T2</th><SerifHead>dT</SerifHead>
          <th>V1</th><th>V2</th><th>dV</th>
          <th>Q1</th><th>Q2</th><th>dQ</th>
        </NameRow>
      </thead>
      <tbody>
        {daily.map((row) => <tr key={row[0]}>{row.map((v, i) => <td key={i}>{v}</td>)}</tr>)}
      </tbody>
      <tfoot>
        <tr>
          <th>Итого</th><td colSpan={3} />
          <td>190,56</td><td>189,81</td><Strong>0,75</Strong>
          <td>12,17</td><td>8,87</td><Strong>3,30</Strong><td>144,02</td>
        </tr>
      </tfoot>
    </DailyGrid>
    <Downtime>
      <Term>Простой прибора (часов):</Term><Fact>0,00</Fact><dt /><dd />
      <Term>Куб. м на простой прибора:</Term><Fact>0,00</Fact>
      <Term>Гкал на простой прибора:</Term><Fact>0,00</Fact>
    </Downtime>
    <Totals>
      <Term>Итого куб. м на ГВС:</Term><Fact>0,75</Fact>
      <Term>Итого Гкал на отопление и ГВС:</Term><Fact>3,30</Fact>
    </Totals>
    <MeterBlock>
      <MeterGrid>
        <Columns widths={[103, 83, 83, 82, 83, 83, 83, 130]} />
        <thead>
          <tr>{["Дата Время", "V1", "V2", "dV", "Q1", "Q2", "dQ", "Время наработки"].map((h) => <th key={h}>{h}</th>)}</tr>
        </thead>
        <tbody>
          {readings.map((row) => <tr key={row[0]}>{row.map((v, i) => <td key={i}>{v}</td>)}</tr>)}
        </tbody>
      </MeterGrid>
      <Mark $side="left" width="132" height="65"><ellipse cx="66" cy="33" rx="63" ry="29" fill="none" stroke="#000" strokeWidth="5" /></Mark>
      <Mark $side="right" width="154" height="67"><ellipse cx="76" cy="33" rx="74" ry="31" fill="none" stroke="#000" strokeWidth="5" /></Mark>
    </MeterBlock>
  </Paper>
);

export default function App() {
  return (
    <Frame>
      <GlobalStyle />
      <TitleBar>
        <Logo />
        <WindowTitle>ЛЭРС УЧЕТ версия 3.07 R14.06</WindowTitle>
        <CaptionButtons>
          <CaptionButton aria-label="Свернуть"><Icon w={9} h={9}><path d="M0 8h5" stroke="#fff" strokeWidth="2" /></Icon></CaptionButton>
          <CaptionButton aria-label="Развернуть"><Icon w={9} h={9}><path d="M1 2h6.500v6H1z" fill="none" stroke="#fff" strokeWidth="1.600" /></Icon></CaptionButton>
          <CaptionButton $close aria-label="Закрыть"><Cross color="#fff" /></CaptionButton>
        </CaptionButtons>
      </TitleBar>
      <Client>
        <MenuBar>
          {menu.map(([text, w]) => <MenuItem key={text} $width={w}>{text}</MenuItem>)}
        </MenuBar>
        <Ribbon>
          <RibbonButton $width={93}><House />Объекты учета</RibbonButton>
          <RibbonButton $width={75}><Faucet />Точки учета</RibbonButton>
          <RibbonButton $width={119}><Helmet />Работы на объектах</RibbonButton>
          <Divider />
          <RibbonButton $width={127}><Warning />Нештатные ситуации</RibbonButton>
          <Divider />
          <RibbonButton $width={85}><MapPin />Мнемосхемы</RibbonButton>
          <Notices aria-label="Уведомления"><Sheets /><Badge>1</Badge></Notices>
        </Ribbon>
        <Workspace>
          <TabStrip>
            <Tabs>{tabs.map(([text, w], i) => <Tab key={i} $width={w}>{text}</Tab>)}</Tabs>
            <GlassButton aria-label="Назад"><Chevron turn={90} /></GlassButton>
            <GlassButton aria-label="Вперед"><Chevron turn={-90} /></GlassButton>
            <GlassButton aria-label="Закрыть вкладку"><Cross color="#2f6db3" /></GlassButton>
          </TabStrip>
          <Document>
            <ReportTools />
            <Content>
              <ReportParameters />
              <Viewer>
                <Desk><Report /></Desk>
                <VScroll>
                  <GlassButton $w={15} $h={15} aria-label="Вверх"><Chevron turn={180} /></GlassButton>
                  <VThumb><Icon w={7} h={7}><path d="M0 1h7M0 3.500h7M0 6h7" stroke="#2f6db3" /></Icon></VThumb>
                  <Gap $grow={272} />
                  <GlassButton $w={15} $h={15} aria-label="Вниз"><Chevron /></GlassButton>
                </VScroll>
                <HScroll>
                  <GlassButton $w={14} $h={15} aria-label="Влево"><Chevron turn={90} /></GlassButton>
                  <Gap $size={20} />
                  <HThumb><Icon w={7} h={7}><path d="M1 0v7M3.500 0v7M6 0v7" stroke="#2f6db3" /></Icon></HThumb>
                  <Gap $size={13} />
                  <GlassButton $w={14} $h={15} aria-label="Вправо"><Chevron turn={-90} /></GlassButton>
                </HScroll>
              </Viewer>
            </Content>
            <PageStatus>
              <span>Отчет 1 из 1.&nbsp; Страница 1 из 1.</span>
              <StatusDivider />
              <Spacer />
              <StatusDivider />
              <span>100%</span>
              <Gap $size={8} />
              <GlassButton $w={15} $h={15} aria-label="Мельче"><Icon w={9} h={9}><path d="M1 4.500h7" stroke="#2f6db3" /></Icon></GlassButton>
              <ZoomSlider type="range" aria-label="Масштаб" defaultValue={49} />
              <GlassButton $w={15} $h={15} aria-label="Крупнее"><Icon w={9} h={9}><path d="M1 4.500h7M4.500 1v7" stroke="#2f6db3" /></Icon></GlassButton>
            </PageStatus>
          </Document>
        </Workspace>
        <ServiceStatus>
          <PrintMenu>Печать отчетов<Caret /></PrintMenu>
          <Spacer />
          <StatusDivider />
          <Modem />
          <Gap $size={4} />
          <ServiceText $width={292}>Служб опроса: 1; портов: 6, действует: 6, свободно: 6</ServiceText>
          <StatusDivider />
          <Progress value={0} aria-label="Ход выполнения" />
          <StatusDivider />
          <ServiceText $width={279} $small>Подключены к '94.24.251.254:10000' в 19:20 (18 ноя)</ServiceText>
        </ServiceStatus>
      </Client>
    </Frame>
  );
}
